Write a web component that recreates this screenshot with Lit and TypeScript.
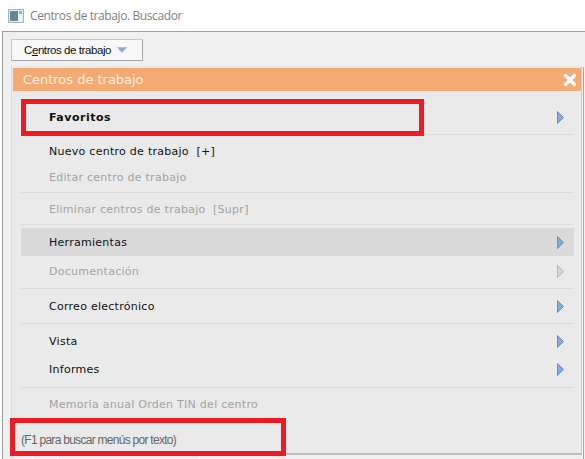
import { LitElement, html, css, svg } from "lit";
import { customElement } from "lit/decorators.js";
import { classMap } from "lit/directives/class-map.js";

type Item = { label?: string; size?: "s" | "m" | "l"; arrow?: boolean; off?: boolean; hot?: boolean; gap?: boolean; sep?: boolean; low?: boolean };

const ITEMS: Item[] = [
  { sep: true },
  { label: "Nuevo centro de trabajo  [+]", size: "m" },
  { label: "Editar centro de trabajo", size: "s", off: true },
  { sep: true },
  { label: "Eliminar centros de trabajo  [Supr]", size: "s", off: true },
  { sep: true },
  { label: "Herramientas", size: "l", arrow: true, hot: true },
  { label: "Documentación", size: "l", arrow: true, off: true, gap: true },
  { sep: true },
  { label: "Correo electrónico", size: "l", arrow: true },
  { sep: true },
  { label: "Vista", size: "l", arrow: true },
  { label: "Informes", size: "l", arrow: true },
  { sep: true, low: true },
  { label: "Memoria anual Orden TIN del centro", size: "l", off: true },
];

const arrow = (off = false) => html`<svg class="arrow" width="9" height="15" viewBox="0 0 9 15">
  ${svg`<path d="M1.5 1.5 L7.5 7.5 L1.5 13.5 Z" fill=${off ? "#d4d4d4" : "#8ba6de"} stroke=${off ? "#b4b4b4" : "#6f8cc6"} stroke-width="1"/>`}
</svg>`;

@customElement("app-root")
export class AppRoot extends LitElement {
  static styles = css`
    :host { display: block; width: 585px; height: 459px; overflow: hidden; position: relative; background: #fff; font-family: "DejaVu Sans", sans-serif; }
    .title { height: 31px; display: flex; align-items: center; gap: 6px; padding-left: 8px; box-sizing: border-box; font: 12px "Open Sans", sans-serif; letter-spacing: -0.4px; color: #7f7f7f; }
    .win { height: 428px; margin-left: 2px; border: 1px solid #a0a0a0; border-bottom: 0; border-right: 0; background: #f0f0f0; padding: 7px 0 0 8px; box-sizing: border-box; }
    .btn { width: 132px; height: 22px; box-sizing: border-box; display: flex; align-items: center; gap: 6px; padding-left: 12px; background: #f8f8f8; border: 1px solid #c8c8c8; border-right-color: #a8a8a8; border-bottom-color: #a8a8a8; font: 11.5px "Liberation Sans", sans-serif; letter-spacing: -0.42px; color: #111; }
    .btn u { text-decoration: underline; }
    .body { display: flex; gap: 1px; margin-top: 5px; }
    .rail { width: 1px; background: #a8a8a8; margin-top: 1px; }
    .stack { display: flex; flex-direction: column; }
    .panel { width: 571px; height: 389px; box-sizing: border-box; border: 1px solid #dcdcdc; border-top: 0; border-bottom: 2px solid #bdbdbd; border-right: 1px solid #d0d0d0; background: #eaeaea; padding: 2px 0 0 1px; display: flex; flex-direction: column; }
    .head { height: 23px; background: #f4ab73; color: #fbeee2; display: flex; align-items: center; justify-content: space-between; padding: 0 4px 0 10px; font-size: 13px; letter-spacing: -0.02px; flex: none; }
    .menu { padding: 12px 7px 0 8px; display: flex; flex-direction: column; }
    .row { display: flex; align-items: center; justify-content: space-between; box-sizing: border-box; padding: 0 9px 0 28px; font-size: 11px; letter-spacing: 0.27px; color: #111; white-space: pre; }
    .s { height: 25px; padding-top: 2px; }
    .m { height: 26px; }
    .l { height: 28px; }
    .fav { font-weight: 700; height: 28px; letter-spacing: 0.5px; }
    .off { color: #a3a3a3; }
    .hot { background: #dadada; }
    .gap { margin-top: 1px; }
    .sep { height: 1px; margin: 3px 0; background: #dcdcdc; }
    .sep.low { margin: 4px 0 2px; }
    .arrow { display: block; flex: none; }
    .foot { margin: 15px 0 0 8px; font: 12px "Liberation Sans", sans-serif; letter-spacing: -0.72px; color: #666; }
    .strip { display: flex; height: 4px; margin-top: 1px; }
    .cell { border-right: 1px solid #fff; box-sizing: border-box; }
    .c1 { width: 22px; } .c2 { width: 25px; } .c3 { width: 142px; } .c4 { flex: 1; border-right: 0; }
    .mark { position: absolute; box-sizing: border-box; border: 5px solid #ed1c24; }
    .m1 { left: 21px; top: 99px; width: 403px; height: 37px; }
    .m2 { left: 10px; top: 418px; width: 276px; height: 38px; }
  `;

  render() {
    return html`
      <div class="title">
        <svg width="16" height="14" viewBox="0 0 16 14">
          <rect x="0.5" y="0.5" width="15" height="13" fill="#eef1f2" stroke="#a8b0b3"/>
          <rect x="2" y="2" width="8" height="10" fill="#5e8a90"/>
          <rect x="11" y="2" width="3" height="3" fill="#9fb0b4"/>
        </svg>
        <span>Centros de trabajo. Buscador</span>
      </div>
      <div class="win">
        <div class="btn">
          <span>C<u>e</u>ntros de trabajo</span>
          <svg width="10" height="6" viewBox="0 0 10 6"><path d="M0.5 0.5 H9.5 L5 5.5 Z" fill="#8ba6de" stroke="#a9bce4"/></svg>
        </div>
        <div class="body">
          <div class="stack">
            <div class="panel">
              <div class="head">
                <span>Centros de trabajo</span>
                <svg width="14" height="14" viewBox="0 0 14 14"><path d="M2.5 2.5 L11.5 11.5 M11.5 2.5 L2.5 11.5" stroke="#fff" stroke-width="3.4" stroke-linecap="round"/></svg>
              </div>
              <div class="menu">
                <div class="row fav"><span>Favoritos</span>${arrow()}</div>
                ${ITEMS.map((it) =>
                  it.sep
                    ? html`<div class=${classMap({ sep: true, low: !!it.low })}></div>`
                    : html`<div class=${classMap({ row: true, [it.size!]: true, off: !!it.off, hot: !!it.hot, gap: !!it.gap })}>
                        <span>${it.label}</span>${it.arrow ? arrow(it.off) : ""}
                      </div>`
                )}
              </div>
              <div class="foot">(F1 para buscar menús por texto)</div>
            </div>
            <div class="strip">
              <div class="cell c1"></div><div class="cell c2"></div><div class="cell c3"></div><div class="cell c4"></div>
            </div>
          </div>
          <div class="rail"></div>
        </div>
      </div>
      <div class="mark m1"></div>
      <div class="mark m2"></div>
    `;
  }
}
